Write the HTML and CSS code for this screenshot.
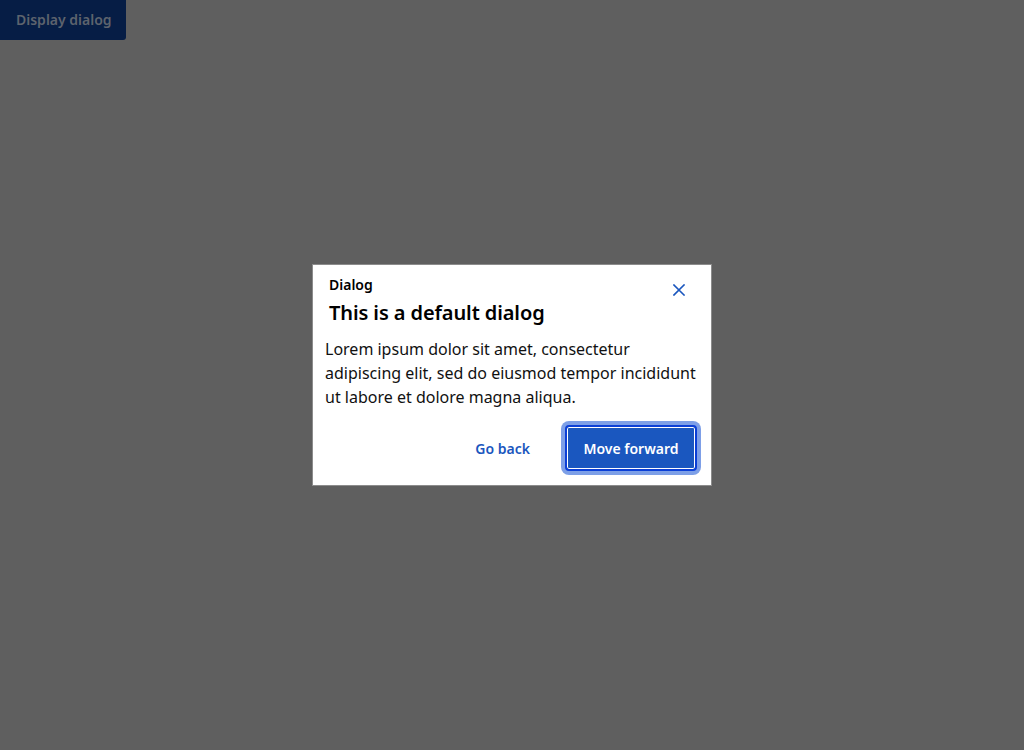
FILE: index.html
```html
<!DOCTYPE html>
<html lang="en">
<head>
<meta charset="utf-8">
<title>Dialog</title>
<link rel="stylesheet" href="styles.css">
</head>
<body>
  <button class="trigger" type="button">Display dialog</button>
  <div class="overlay">
    <div class="dialog" role="dialog" aria-labelledby="dlg-title">
      <div class="dialog-header">
        <div class="dialog-headings">
          <div class="dialog-label">Dialog</div>
          <h2 class="dialog-title" id="dlg-title">This is a default dialog</h2>
        </div>
        <button class="close-btn" type="button" aria-label="Close">
          <svg width="12" height="12" viewBox="0 0 12 12" aria-hidden="true">
            <path d="M1 1 L11 11 M11 1 L1 11" stroke="#1a56be" stroke-width="1.6" stroke-linecap="square" fill="none"/>
          </svg>
        </button>
      </div>
      <p class="dialog-body">Lorem ipsum dolor sit amet, consectetur adipiscing elit, sed do eiusmod tempor incididunt ut labore et dolore magna aliqua.</p>
      <div class="dialog-footer">
        <button class="btn btn-ghost" type="button">Go back</button>
        <button class="btn btn-primary" type="button">Move forward</button>
      </div>
    </div>
  </div>
</body>
</html>
```
FILE: styles.css
```css
html, body {
  margin: 0;
  padding: 0;
  height: 100%;
}
body {
  background: #5f5f5f;
  font-family: "Noto Sans", "Open Sans", sans-serif;
  color: #000;
}
.trigger {
  display: block;
  width: 126px;
  height: 40px;
  margin: 0;
  padding: 0 16px 2px 16px;
  border: none;
  border-radius: 0 0 3px 0;
  background: #061d45;
  color: #5d636d;
  font-family: "Noto Sans", "Open Sans", sans-serif;
  font-size: 14px;
  font-weight: 600;
  text-align: left;
  white-space: nowrap;
}
.overlay {
  position: fixed;
  inset: 0;
  display: flex;
  align-items: center;
  justify-content: center;
}
.dialog {
  width: 398px;
  background: #fff;
  border: 1px solid #8c8c8c;
  box-sizing: content-box;
  display: flex;
  flex-direction: column;
}
.dialog-header {
  display: flex;
  align-items: flex-start;
  justify-content: space-between;
  padding: 10px 16px 0 16px;
}
.dialog-headings {
  display: flex;
  flex-direction: column;
  gap: 4px;
}
.dialog-label {
  font-size: 14px;
  font-weight: 600;
  line-height: 20px;
}
.dialog-title {
  margin: 0;
  font-size: 20px;
  font-weight: 600;
  line-height: 28px;
  letter-spacing: -0.1px;
}
.close-btn {
  width: 32px;
  height: 32px;
  margin-top: -1px;
  padding: 0;
  border: none;
  background: transparent;
  display: flex;
  align-items: center;
  justify-content: center;
}
.dialog-body {
  margin: 10px 0 0 0;
  padding: 0 12px;
  font-size: 16px;
  line-height: 24px;
  color: #111;
}
.dialog-footer {
  display: flex;
  justify-content: flex-end;
  align-items: center;
  padding: 16px 14px 14px 16px;
  gap: 15px;
}
.btn {
  height: 46px;
  font-family: "Noto Sans", "Open Sans", sans-serif;
  font-size: 14px;
  font-weight: 600;
  border-radius: 3px;
  box-sizing: border-box;
  white-space: nowrap;
}
.btn-ghost {
  padding: 0 20px;
  border: none;
  background: transparent;
  color: #1a56be;
}
.btn-primary {
  width: 132px;
  padding: 0;
  border: 2px solid #0b3fd6;
  background: #1a57bf;
  color: #fff;
  box-shadow: inset 0 0 0 1px #fff, 0 0 0 4px #7d9fe7;
  border-radius: 4px;
}
```
